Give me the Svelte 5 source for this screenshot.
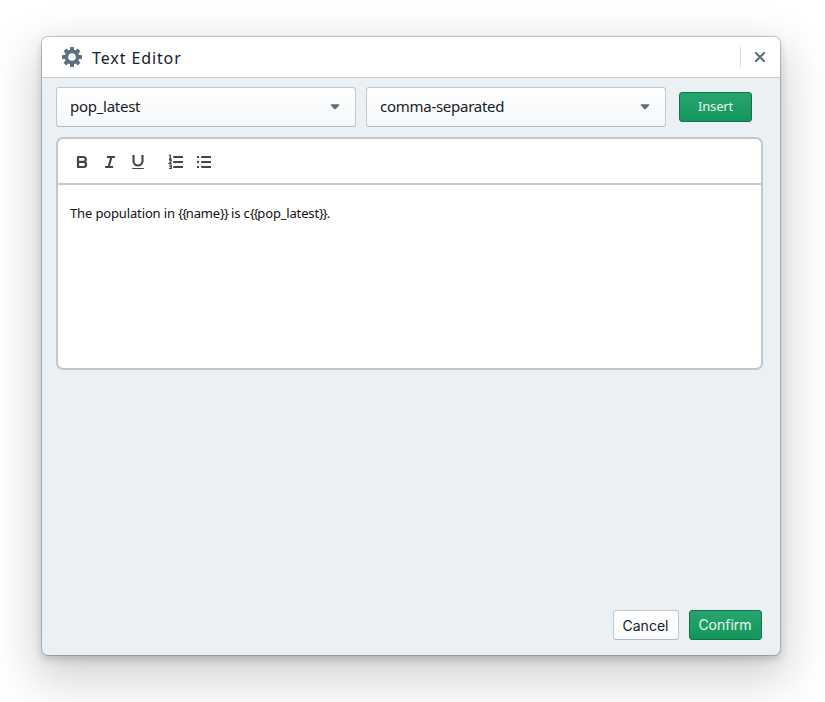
<script>
  let field = $state('pop_latest');
  let format = $state('comma-separated');
  let content = $state('The population in {{name}} is c{{pop_latest}}.');
  let parts = $derived(content.split(/(\{\{|\}\}|_)/));
  const teeth = [0, 45, 90, 135, 180, 225, 270, 315];
</script>

{#snippet caret()}
  <svg class="caret" width="10" height="6" viewBox="0 0 10 6"><path d="M1.5 .3h7c.7 0 1 .7.6 1.1L5.8 5.1q-.8.7-1.6 0L.9 1.4C.5 1 .8.3 1.5.3z" fill="#5c7080" /></svg>
{/snippet}

<main>
  <section class="dialog">
    <header>
      <svg width="20" height="20" viewBox="0 0 20 20">
        <g fill="#5c7080">
          {#each teeth as angle}
            <rect x="8" y="0" width="4" height="5" rx="0.8" transform="rotate({angle} 10 10)" />
          {/each}
        </g>
        <circle cx="10" cy="10" r="5.6" fill="none" stroke="#5c7080" stroke-width="3.6" />
      </svg>
      <h1>Text Editor</h1>
      <button class="close" aria-label="Close">
        <svg width="12" height="12" viewBox="0 0 12 12"><path d="M2 2l8 8M10 2l-8 8" stroke="#5c7080" stroke-width="2.2" stroke-linecap="round" /></svg>
      </button>
    </header>

    <div class="controls">
      <button class="select"><span class="field">{field}</span>{@render caret()}</button>
      <button class="select"><span class="format">{format}</span>{@render caret()}</button>
      <button class="btn primary insert"><span>Insert</span></button>
    </div>

    <div class="editor">
      <div class="toolbar">
        <svg width="28" height="28" viewBox="0 0 28 28"><path d="M10 9h5.4a2.4 2.4 0 0 1 0 4.9H10zM10 13.9h6a2.6 2.6 0 0 1 0 5.1H10z" stroke-width="2.2" stroke-linejoin="round" /></svg>
        <svg width="28" height="28" viewBox="0 0 28 28"><path d="M10.9 9h8M9.1 19h8M15.4 9l-2.8 10" stroke-width="2.2" /></svg>
        <svg width="28" height="28" viewBox="0 0 28 28"><path d="M9.5 7v6a4.5 4.5 0 0 0 9 0V7" stroke-width="2.1" /><path d="M8.2 20.5h11.6" stroke-width="1.2" /></svg>
        <svg class="list" width="28" height="28" viewBox="0 0 28 28"><path d="M11.2 9H21M11.2 14H21M11.2 19H21" stroke-width="2.2" /><path d="M7 7.7l1.3-.5v3.6M7 10.8h2.5M7 12.2h2.2v1l-2 2.3h2.5M7 17h2.3v3.5H7M7.5 18.7h1.8" stroke-width="1.2" /></svg>
        <svg width="28" height="28" viewBox="0 0 28 28"><path d="M11.2 9H21M11.2 14H21M11.2 19H21" stroke-width="2.2" /><path d="M7 9h2M7 14h2M7 19h2" stroke-width="2" /></svg>
      </div>
      <p>{#each parts as part}<span class:brace={part === '{{' || part === '}}'} class:underscore={part === '_'}>{part}</span>{/each}</p>
    </div>

    <footer>
      <button class="btn cancel"><span>Cancel</span></button>
      <button class="btn primary confirm"><span>Confirm</span></button>
    </footer>
  </section>
</main>

<style>
  :global(body) { background: #fff; }
  * { box-sizing: border-box; }
  main { width: 825px; height: 702px; padding: 37px 0 0 42px; overflow: hidden; font-family: "Noto Sans", sans-serif; }
  .dialog { width: 738px; height: 618px; display: flex; flex-direction: column; border-radius: 6px; background: #ebf0f4; overflow: hidden; box-shadow: 0 0 0 1px rgba(16,22,26,.2), 0 4px 8px rgba(16,22,26,.2), 0 18px 46px 6px rgba(16,22,26,.2); }
  header { flex: none; height: 41px; padding-left: 20px; display: flex; align-items: center; background: #fff; border-bottom: 1px solid #c9cdd0; }
  h1 { flex: 1; margin: 0 0 0 10px; padding-top: 1px; font-size: 16px; line-height: 22px; font-weight: 400; letter-spacing: .9px; color: #182026; white-space: nowrap; }
  button { font: inherit; border: 0; margin: 0; }
  .close { width: 40px; height: 20px; padding: 0 2px 0 0; display: flex; align-items: center; justify-content: center; background: none; border-left: 1px solid #d8dbdd; }
  .controls { display: flex; height: 40px; flex: none; margin: 9px 0 0 14px; align-items: center; }
  .select { width: 300px; height: 40px; margin-right: 10px; padding: 0 15px 0 13px; display: flex; align-items: center; justify-content: space-between; border: 1px solid #c2c8cd; border-bottom-color: #b4babf; border-radius: 3px; background: linear-gradient(#fff, #f5f7f9); color: #182026; font-size: 15px; letter-spacing: -.27px; }
  .select span { padding-bottom: 2px; }
  .btn { height: 30px; padding: 0; border-radius: 3px; display: flex; align-items: center; justify-content: center; white-space: nowrap; }
  .primary { width: 73px; border: 1px solid #117348; background: linear-gradient(#28a56f, #12965b); color: #e7f6ef; }
  .insert { margin-left: 3px; font-size: 13px; letter-spacing: -.2px; }
  .insert span { padding-bottom: 2px; }
  .editor { flex: none; width: 707px; height: 233px; margin: 10px 0 0 14px; border: 2px solid #c4c6c7; border-radius: 7px; background: #fff; }
  .toolbar { height: 46px; padding: 9px 0 0 10px; display: flex; border-bottom: 2px solid #c8c9ca; }
  .toolbar svg { fill: none; stroke: #444; flex: none; }
  .toolbar .list { margin-left: 10px; }
  p { margin: 18px 0 0 12px; font-size: 13px; line-height: 20px; letter-spacing: -.14px; color: #111; white-space: nowrap; }
  .brace { letter-spacing: -1.1px; }
  .underscore { letter-spacing: -.3px; }
  footer { display: flex; gap: 10px; margin: auto 18px 15px auto; font-family: Inter, sans-serif; font-size: 14px; letter-spacing: -.15px; }
  .cancel { width: 66px; border: 1px solid #c2c8cd; border-bottom-color: #b4babf; background: linear-gradient(#fff, #f8fafb); color: #182026; }
  .cancel span { padding-top: 1px; padding-right: 1px; }
  .confirm span { padding-right: 1px; padding-bottom: 1px; }
</style>
